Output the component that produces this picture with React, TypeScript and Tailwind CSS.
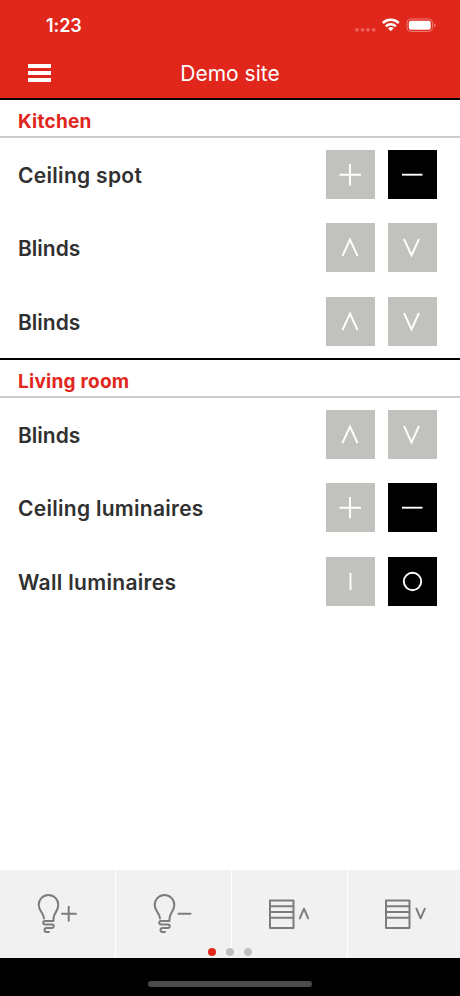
import React from 'react';

type IconName = 'plus' | 'minus' | 'up' | 'down' | 'on' | 'off';

interface ControlButton {
  icon: IconName;
  active?: boolean;
}

interface Device {
  name: string;
  tracking: string;
  buttons: ControlButton[];
}

interface Room {
  name: string;
  devices: Device[];
}

const blindButtons: ControlButton[] = [{ icon: 'up' }, { icon: 'down' }];
const dimButtons: ControlButton[] = [{ icon: 'plus' }, { icon: 'minus', active: true }];
const switchButtons: ControlButton[] = [{ icon: 'on' }, { icon: 'off', active: true }];

const rooms: Room[] = [
  {
    name: 'Kitchen',
    devices: [
      { name: 'Ceiling spot', tracking: 'tracking-[0.3px]', buttons: dimButtons },
      { name: 'Blinds', tracking: 'tracking-[0px]', buttons: blindButtons },
      { name: 'Blinds', tracking: 'tracking-[0px]', buttons: blindButtons },
    ],
  },
  {
    name: 'Living room',
    devices: [
      { name: 'Blinds', tracking: 'tracking-[0px]', buttons: blindButtons },
      { name: 'Ceiling luminaires', tracking: 'tracking-[0.28px]', buttons: dimButtons },
      { name: 'Wall luminaires', tracking: 'tracking-[0.32px]', buttons: switchButtons },
    ],
  },
];

const iconShapes: Record<IconName, React.ReactNode> = {
  plus: <path d="M13.5 24.7h21.5M24 14v21.5" />,
  minus: <path d="M14 24.7h20.5" />,
  up: <path d="M16.5 33L24 16.5L31.5 33" />,
  down: <path d="M16 16L23.5 32.5L31 16" />,
  on: <path d="M24.5 16v17" />,
  off: <circle cx="24.5" cy="24.5" r="8.7" />,
};

const DeviceButton: React.FC<ControlButton> = ({ icon, active }) => (
  <button className={`h-[49px] w-[49px] ${active ? 'bg-black' : 'bg-[#c1c2bd]'}`}>
    <svg className="h-[49px] w-[49px]" viewBox="0 0 49 49" fill="none" stroke="#fff" strokeWidth="1.9">
      {iconShapes[icon]}
    </svg>
  </button>
);

const RoomSection: React.FC<{ room: Room }> = ({ room }) => (
  <section>
    <h2 className="flex h-10 items-center border-t-2 border-b-2 border-t-black border-b-[#cbcbcb] pt-[7px] pl-[18px] text-[19px] leading-none font-bold tracking-[0.25px] text-[#e1261c]">
      {room.name}
    </h2>
    <div className="grid h-[220px] grid-rows-3">
      {room.devices.map((device, i) => (
        <div key={i} className="flex items-center justify-between pr-[23px] pl-[18px]">
          <span className={`pt-[2px] text-[21px] leading-none font-semibold text-[#303030] ${device.tracking}`}>{device.name}</span>
          <div className="flex gap-[13px]">
            {device.buttons.map((button) => (
              <DeviceButton key={button.icon} {...button} />
            ))}
          </div>
        </div>
      ))}
    </div>
  </section>
);

const Bulb: React.FC = () => (
  <path d="M14 32.5C14 27 8.7 25.500 8.700 18.800a9.800 9.800 0 0 1 19.600 0C28.300 25.500 23.500 27 23.500 32.500v2.500h-8.500a1.750 1.750 0 0 0 0 3.500h7a1.750 1.750 0 0 1 0 3.500h-5.500a2 2 0 0 0 0 4h2.500" />
);

const Shutter: React.FC = () => (
  <path d="M8 14.500h23.500v27.500h-23.500zM8 20.300h23.500M8 26h23.500M8 31.800h23.500" />
);

const scenes = [
  { name: 'lights-up', shape: <><Bulb /><path d="M32 27.700h14M38.700 20.700v14" /></> },
  { name: 'lights-down', shape: <><Bulb /><path d="M32.500 27.700h12" /></> },
  { name: 'blinds-up', shape: <><Shutter /><path d="M37.800 32.300l4.200-9.600l4.200 9.600" /></> },
  { name: 'blinds-down', shape: <><Shutter /><path d="M38.400 22.700l4.200 9.600l4.200-9.600" /></> },
];

const StatusBar: React.FC = () => (
  <div className="flex h-12 items-center justify-between pt-[4px] pr-6 pl-[46px]">
    <span className="text-[18px] leading-none font-semibold tracking-[-0.1px]">1:23</span>
    <svg className="h-5 w-[82px]" viewBox="0 0 82 20" fill="none">
      <g fill="#ee6158">
        <circle cx="3" cy="13.800" r="1.900" />
        <circle cx="8.500" cy="13.800" r="1.900" />
        <circle cx="14" cy="13.800" r="1.900" />
        <circle cx="19.700" cy="13.800" r="1.900" />
      </g>
      <g stroke="#fff" strokeWidth="2.500">
        <path d="M28.800 7a11.800 11.800 0 0 1 16 0" />
        <path d="M31.800 10.300a7.300 7.300 0 0 1 10 0" />
      </g>
      <path d="M34 12.300a4.200 4.200 0 0 1 5.600 0l-2.800 3z" fill="#fff" />
      <rect x="53" y="3" width="25.500" height="12.500" rx="3.800" stroke="#ef7d76" />
      <rect x="54.800" y="4.800" width="22" height="9" rx="2.200" fill="#fff" />
      <path d="M80 7.200v4q1.600-.5 1.600-2t-1.600-2z" fill="#ef7d76" />
    </svg>
  </div>
);

const App: React.FC = () => {
  return (
    <div className="flex h-[996px] w-[460px] flex-col overflow-hidden bg-white font-['Inter',sans-serif]">
      <header className="h-[98px] bg-[#e1261c] text-white">
        <StatusBar />
        <div className="grid h-[50px] grid-cols-[1fr_auto_1fr] items-center px-7">
          <button className="flex w-[23px] flex-col gap-[3px]">
            <span className="h-[3.7px] bg-white" />
            <span className="h-[3.7px] bg-white" />
            <span className="h-[3.7px] bg-white" />
          </button>
          <h1 className="text-[21px] leading-none tracking-[0px]">Demo site</h1>
        </div>
      </header>

      <main className="flex-1">
        {rooms.map((room) => (
          <RoomSection key={room.name} room={room} />
        ))}
      </main>

      <nav className="relative grid h-[88px] grid-cols-[115px_115px_115px_1fr] gap-px bg-white">
        {scenes.map((scene) => (
          <button key={scene.name} className="flex items-center bg-[#f1f1f1] pl-[30px]">
            <svg className="h-14 w-[56px]" viewBox="0 0 56 56" fill="none" stroke="#7c7c7c" strokeWidth="2" strokeLinecap="round" strokeLinejoin="round">
              {scene.shape}
            </svg>
          </button>
        ))}
        <div className="absolute bottom-[2px] left-[208px] flex gap-[10px]">
          <span className="h-2 w-2 rounded-full bg-[#e1261c]" />
          <span className="h-2 w-2 rounded-full bg-[#bfbfbf]" />
          <span className="h-2 w-2 rounded-full bg-[#bfbfbf]" />
        </div>
      </nav>

      <footer className="flex h-[38px] items-end justify-center bg-black pb-[9px]">
        <span className="h-[6px] w-[164px] rounded-full bg-[#4b4b4b]" />
      </footer>
    </div>
  );
};

export default App;
